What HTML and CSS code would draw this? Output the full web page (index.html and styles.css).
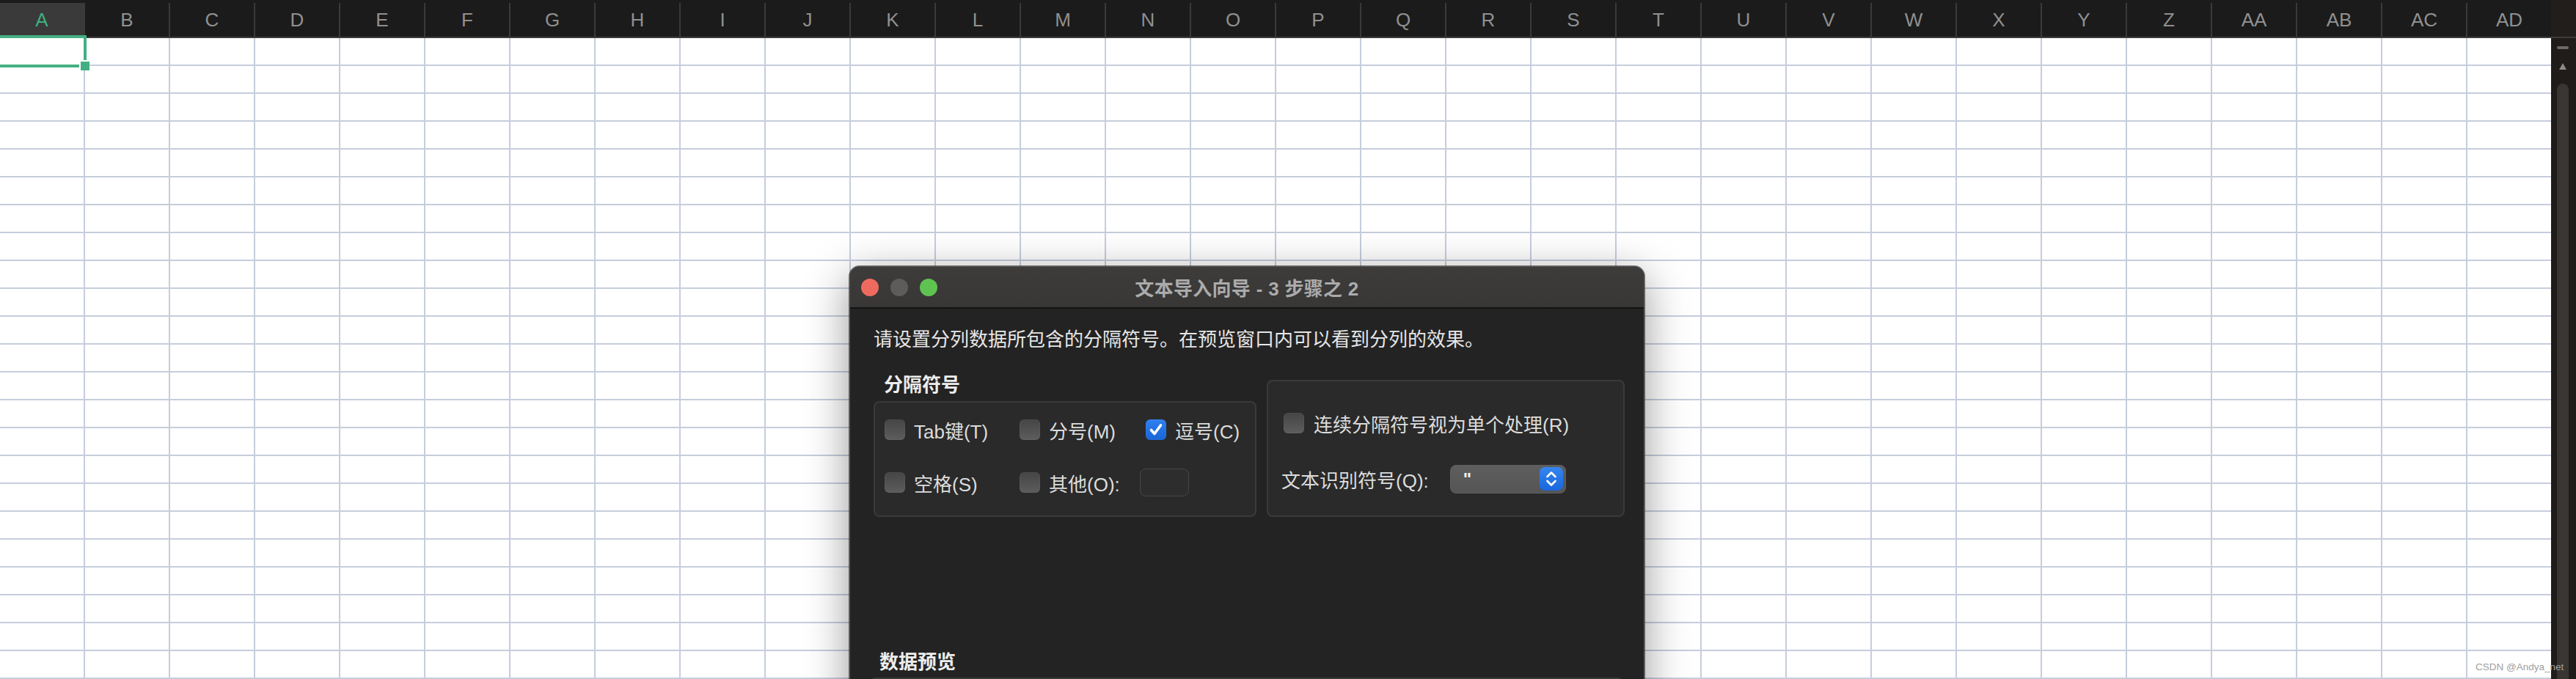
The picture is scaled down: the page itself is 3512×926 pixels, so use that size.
FILE: index.html
```html
<!DOCTYPE html>
<html lang="zh-CN">
<head>
<meta charset="utf-8">
<title>文本导入向导</title>
<link rel="stylesheet" href="styles.css">
</head>
<body>
<div class="app">
  <div class="head-row">
    <div class="col-heads">
      <div class="ch active">A</div><div class="ch">B</div><div class="ch">C</div><div class="ch">D</div><div class="ch">E</div><div class="ch">F</div><div class="ch">G</div><div class="ch">H</div><div class="ch">I</div><div class="ch">J</div><div class="ch">K</div><div class="ch">L</div><div class="ch">M</div><div class="ch">N</div><div class="ch">O</div><div class="ch">P</div><div class="ch">Q</div><div class="ch">R</div><div class="ch">S</div><div class="ch">T</div><div class="ch">U</div><div class="ch">V</div><div class="ch">W</div><div class="ch">X</div><div class="ch">Y</div><div class="ch">Z</div><div class="ch">AA</div><div class="ch">AB</div><div class="ch">AC</div><div class="ch">AD</div>
    </div>
    <div class="sb-head"></div>
  </div>
  <div class="main-row">
    <div class="sheet"></div>
    <div class="scrollbar">
      <span class="sb-min"></span>
      <span class="sb-up"></span>
      <span class="sb-thumb"></span>
    </div>
  </div>

  <div class="sel"></div>
  <div class="sel-handle"></div>

  <div class="dialog">
    <div class="titlebar">
      <div class="lights">
        <span class="light red"></span>
        <span class="light gray"></span>
        <span class="light green"></span>
      </div>
      <div class="title">文本导入向导 - 3 步骤之 2</div>
      <div></div>
    </div>
    <div class="dlg-body">
      <p class="intro">请设置分列数据所包含的分隔符号。在预览窗口内可以看到分列的效果。</p>
      <div class="groups">
        <div class="left-col">
          <div class="grp-title">分隔符号</div>
          <div class="box box-left">
            <label class="opt"><span class="cb"></span>Tab键(T)</label>
            <label class="opt"><span class="cb"></span>分号(M)</label>
            <label class="opt"><span class="cb checked"><svg viewBox="0 0 28 28" width="28" height="28"><path d="M7.5 14.5 L12 19.5 L20.5 8" fill="none" stroke="#fff" stroke-width="3.6" stroke-linecap="round" stroke-linejoin="round"/></svg></span>逗号(C)</label>
            <label class="opt"><span class="cb"></span>空格(S)</label>
            <label class="opt"><span class="cb"></span>其他(O):<span class="other-input"></span></label>
          </div>
        </div>
        <div class="box box-right">
          <label class="opt opt-r"><span class="cb"></span>连续分隔符号视为单个处理(R)</label>
          <div class="qual">
            <span class="qual-label">文本识别符号(Q):</span>
            <div class="select">
              <span class="sel-value">"</span>
              <span class="stepper"><svg viewBox="0 0 32 32" width="32" height="32"><path d="M10.5 13 L16 7.5 L21.5 13 M10.5 19 L16 24.5 L21.5 19" fill="none" stroke="#fff" stroke-width="2.6" stroke-linecap="round" stroke-linejoin="round"/></svg></span>
            </div>
          </div>
        </div>
      </div>
      <div class="pv-title">数据预览</div>
      <div class="pv-box"></div>
    </div>
  </div>

  <div class="watermark">CSDN @Andya_net</div>
</div>
</body>
</html>
```
FILE: styles.css
```css
html, body {
  margin: 0;
  padding: 0;
  height: 100%;
  overflow: hidden;
  background: #fff;
}

.app {
  position: relative;
  width: 3512px;
  height: 926px;
  display: flex;
  flex-direction: column;
  font-family: "Liberation Sans", "Noto Sans CJK SC", sans-serif;
  overflow: hidden;
}

/* column header */
.head-row {
  display: flex;
  flex: none;
  height: 50px;
  border-bottom: 2px solid #3c3c3c;
  background: #1b1b1b;
}
.col-heads {
  display: flex;
  flex: none;
  width: 3478px;
  overflow: hidden;
}
.ch {
  flex: none;
  width: 114px;
  margin-top: 4px;
  border-right: 2px solid #3a3a3a;
  display: flex;
  align-items: center;
  justify-content: center;
  font-size: 26px;
  color: #909090;
}
.ch.active {
  background: #3a3a3a;
  color: #3fb07f;
}
.sb-head {
  flex: 1;
  background: #221e1b;
}

/* sheet */
.main-row {
  flex: 1;
  display: flex;
  min-height: 0;
}
.sheet {
  flex: none;
  width: 3478px;
  background-color: #fff;
  background-image:
    linear-gradient(to right, transparent 114px, #c6cddc 114px),
    linear-gradient(to bottom, transparent 36px, #c6cddc 36px);
  background-size: 116px 100%, 100% 38px;
}
.scrollbar {
  flex: 1;
  background: #1f1c19;
  display: flex;
  flex-direction: column;
  padding: 11px 0 0 8px;
}
.sb-min {
  width: 16px;
  height: 4px;
  border-radius: 2px;
  background: #6b6b6b;
}
.sb-up {
  width: 0;
  height: 0;
  margin: 19px 0 0 3px;
  border-left: 5px solid transparent;
  border-right: 5px solid transparent;
  border-bottom: 9px solid #8b8b8b;
}
.sb-thumb {
  flex: 1;
  width: 16px;
  margin-top: 19px;
  border-radius: 8px 8px 0 0;
  background: #383532;
}

/* selection */
.sel {
  position: absolute;
  left: -4px;
  top: 48px;
  width: 114px;
  height: 36px;
  border: 4px solid #43b083;
}
.sel-handle {
  position: absolute;
  left: 110px;
  top: 84px;
  width: 12px;
  height: 12px;
  background: #43b083;
  box-shadow: -2px -2px 0 #fff;
}

/* dialog */
.dialog {
  position: absolute;
  left: 1158px;
  top: 363px;
  width: 1082px;
  height: 640px;
  border: 1px solid #575655;
  border-bottom: none;
  border-radius: 14px 14px 0 0;
  background: #232323;
  box-shadow: 0 0 0 1px rgba(0, 0, 0, 0.5), 0 14px 60px rgba(0, 0, 0, 0.42);
  overflow: hidden;
  display: flex;
  flex-direction: column;
}
.titlebar {
  flex: none;
  height: 55px;
  padding: 0 15px;
  border-bottom: 2px solid #131313;
  background: linear-gradient(#3d3c3b, #383736);
  display: grid;
  grid-template-columns: 1fr auto 1fr;
  align-items: center;
}
.lights {
  display: flex;
  gap: 16px;
}
.light {
  width: 24px;
  height: 24px;
  border-radius: 50%;
}
.light.red { background: #ee6a5f; }
.light.gray { background: #5d5c5b; }
.light.green { background: #5fc352; }
.title {
  font-weight: bold;
  font-size: 26px;
  letter-spacing: 0.3px;
  color: #ababab;
}

.dlg-body {
  padding: 27px 27px 0 32px;
}
.intro {
  margin: 0;
  font-size: 26px;
  line-height: 30px;
  color: #e6e6e6;
}
.groups {
  display: flex;
  align-items: flex-end;
  gap: 14px;
  margin-top: 32px;
}
.left-col {
  width: 522px;
  flex: none;
}
.grp-title,
.pv-title {
  font-weight: bold;
  font-size: 26px;
  line-height: 30px;
  color: #ededed;
}
.grp-title {
  margin: 0 0 7px 14px;
}
.box {
  box-sizing: border-box;
  background: #2a2a2a;
  border: 2px solid #3a3a3a;
  border-radius: 8px;
}
.box-left {
  height: 158px;
  padding: 15px 0 0 13px;
  display: grid;
  grid-template-columns: 184px 172px auto;
  grid-template-rows: 44px 44px;
  row-gap: 28px;
}
.box-right {
  flex: none;
  width: 488px;
  height: 187px;
  padding: 35px 0 0 18px;
  display: flex;
  flex-direction: column;
  gap: 32px;
}
.opt {
  display: flex;
  align-items: center;
  gap: 12px;
  height: 44px;
  font-size: 26px;
  color: #dcdcdc;
  white-space: nowrap;
}
.opt-r {
  margin-left: 3px;
  gap: 13px;
}
.cb {
  flex: none;
  width: 28px;
  height: 28px;
  box-sizing: border-box;
  border-radius: 6px;
  background: linear-gradient(#454545, #5d5d5d);
  box-shadow: inset 0 0 0 1px rgba(255, 255, 255, 0.04);
}
.cb.checked {
  background: linear-gradient(#2f80ef, #1865d8);
}
.cb svg {
  display: block;
}
.other-input {
  flex: none;
  width: 67px;
  height: 38px;
  box-sizing: border-box;
  margin-left: 15px;
  border: 1px solid #474747;
  border-radius: 8px;
  background: #2d2d2d;
}
.qual {
  display: flex;
  align-items: center;
  gap: 29px;
  height: 44px;
  font-size: 26px;
  color: #dcdcdc;
  white-space: nowrap;
}
.select {
  flex: none;
  width: 158px;
  height: 39px;
  box-sizing: border-box;
  padding: 0 3px 0 17px;
  border: 1px solid #5f5f5f;
  border-radius: 8px;
  background: linear-gradient(#5e5e5e, #555555);
  display: flex;
  align-items: center;
  justify-content: space-between;
}
.sel-value {
  align-self: flex-start;
  margin-top: 5px;
  font-size: 24px;
  line-height: 28px;
  font-weight: bold;
  color: #f0f0f0;
}
.stepper {
  flex: none;
  width: 32px;
  height: 32px;
  border-radius: 7px;
  background: linear-gradient(#3585f0, #1967dc);
}
.stepper svg {
  display: block;
}
.pv-title {
  margin: 183px 0 6px 8px;
}
.pv-box {
  box-sizing: border-box;
  width: 1027px;
  height: 100px;
  margin-left: -5px;
  border: 2px solid #3a3a3a;
  border-radius: 8px;
  background: #2a2a2a;
}

.watermark {
  position: absolute;
  left: 3375px;
  top: 902px;
  font-family: "Liberation Sans", sans-serif;
  font-size: 13.5px;
  line-height: 16px;
  color: #a0a0a0;
}
```
